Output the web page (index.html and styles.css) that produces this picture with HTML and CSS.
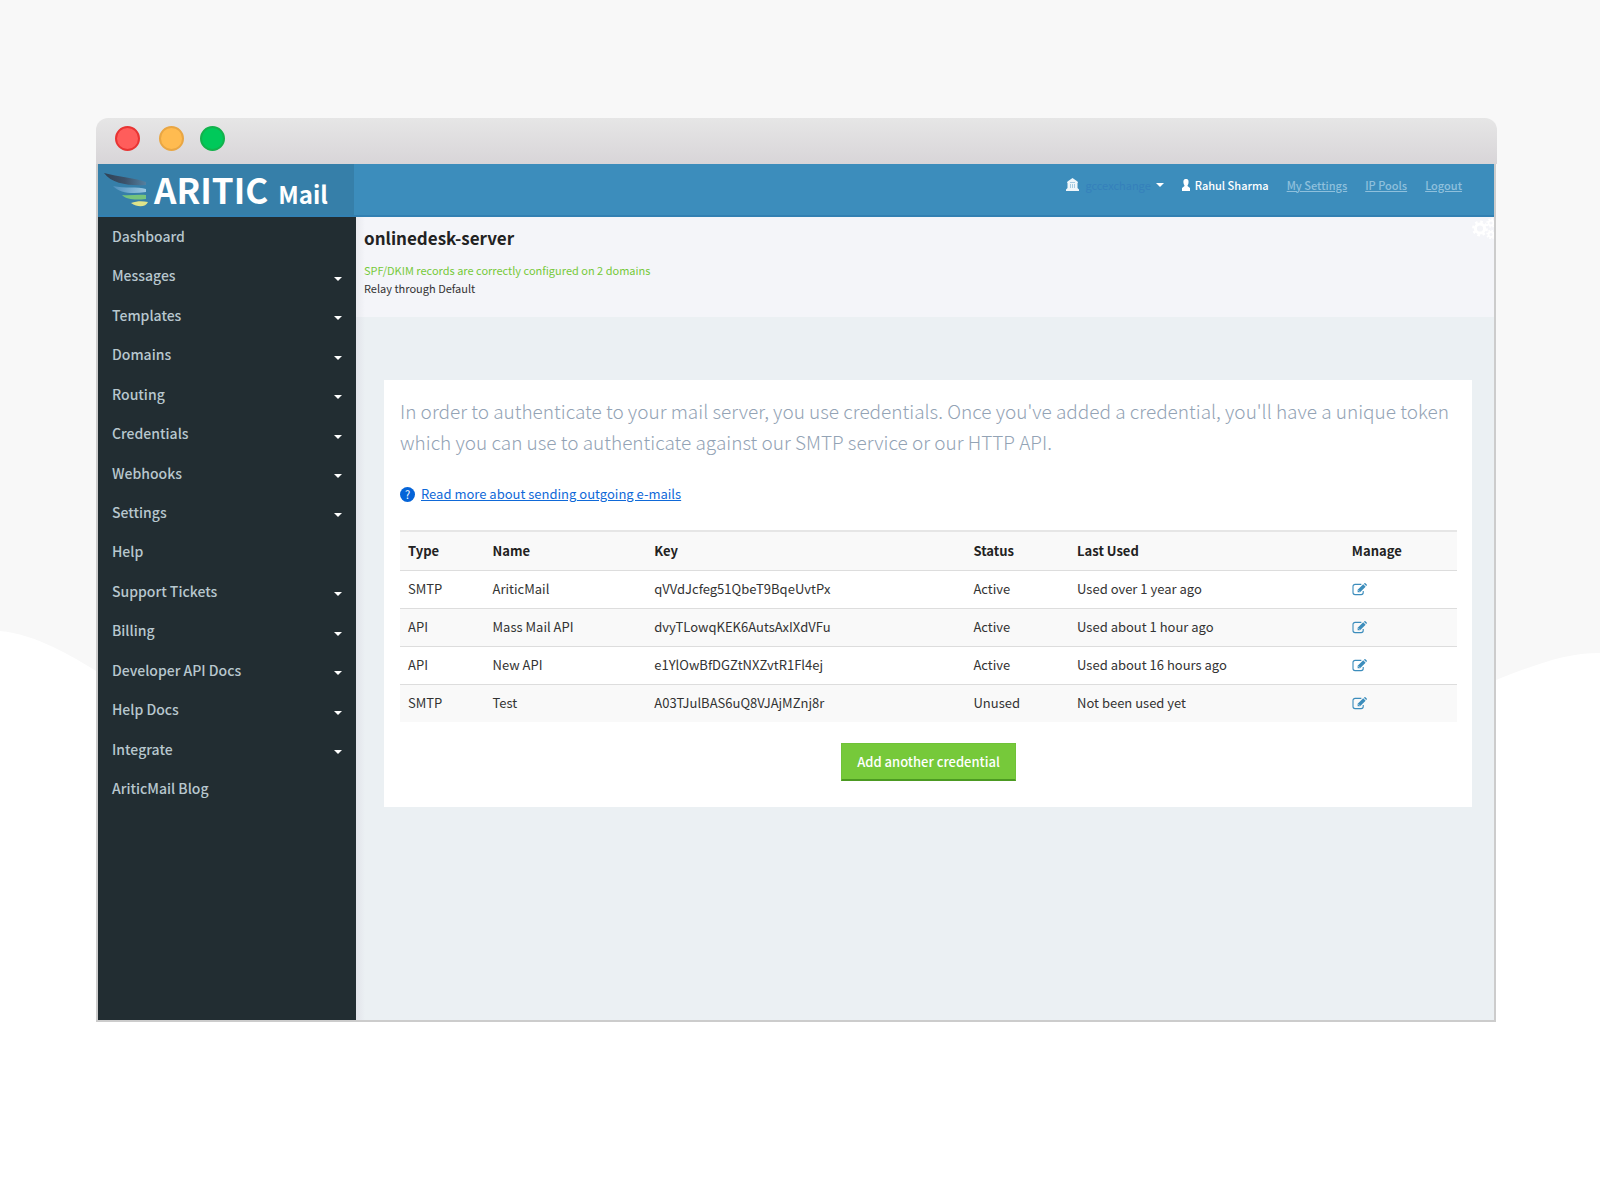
FILE: index.html
```html
<!DOCTYPE html>
<html lang="en">
<head>
<meta charset="utf-8">
<title>Credentials - AriticMail</title>
<link rel="stylesheet" href="styles.css">
</head>
<body>
<svg class="defs" aria-hidden="true">
  <symbol id="edit" viewBox="0 0 16 14">
    <path d="M10 1.5H3.2A2.2 2.2 0 0 0 1 3.700v6.600a2.200 2.200 0 0 0 2.200 2.200h6.600a2.200 2.200 0 0 0 2.200-2.200V8.500" fill="none" stroke="currentColor" stroke-width="1.200"/>
    <path d="M6 10V7.400l6-6 2.600 2.600-6 6zM12.700.8l.7-.6q.5-.4 1 0l1.400 1.400q.4.500 0 1l-.6.700z" fill="currentColor"/>
    <path d="M7 8l1.200 1.200" stroke="#fff" stroke-width=".8"/>
  </symbol>
</svg>
<svg class="backdrop" viewBox="0 0 1600 1200" preserveAspectRatio="none" aria-hidden="true">
  <path d="M0 631C35 634 72 656 96 671C400 850 1100 830 1496 680C1540 663 1566 653 1600 653V1200H0z" fill="#fff"/>
</svg>
<div class="window">
  <div class="titlebar"><span class="dot red"></span><span class="dot amber"></span><span class="dot green"></span></div>
  <div class="frame">
    <header class="top">
      <a class="logo" href="#">
        <svg class="wing" viewBox="0 0 44 34" aria-hidden="true">
          <defs>
            <linearGradient id="w" x1="0" x2="1"><stop offset="0" stop-color="#2f4154"/><stop offset=".5" stop-color="#3c526a"/><stop offset="1" stop-color="#5480a0"/></linearGradient>
            <linearGradient id="b" x1="0" x2="1"><stop offset="0" stop-color="#4f90bd"/><stop offset="1" stop-color="#9cc8e2"/></linearGradient>
          </defs>
          <path d="M0 0C14 4 32 5 42 9V12C26 13 8 11 0 0z" fill="url(#w)"/>
          <path d="M9 13C20 16 34 13 42 16V19C30 21 16 21 9 13z" fill="url(#b)"/>
          <path d="M18 22C26 23 34 21 42 22V26C32 27 23 27 18 22z" fill="#76c47c"/>
          <path d="M27 30C33 28 38 28 44 29C42 34 34 35 27 30z" fill="#dfe48a"/>
        </svg>
        <span class="brand">ARITIC</span><span class="product">Mail</span>
      </a>
      <nav class="account">
        <button class="org" type="button">
          <svg width="13" height="13" viewBox="0 0 13 13" aria-hidden="true"><path d="M6.500 0L11.500 3.500 12 5H11.500v5L13 11.500V13H0v-1.500L1.500 10V5H1L1.500 3.500z" fill="#fff" opacity=".92"/><path d="M4.500 6v4M6.500 6v4M8.500 6v4" stroke="#3c8dbc" stroke-width="1" opacity=".4"/><path d="M4 4.500h5" stroke="#3c8dbc" opacity=".4"/></svg>
          <span class="org-name">gccexchange</span><span class="caret"></span>
        </button>
        <span class="user"><svg width="8" height="12" viewBox="0 0 8 12" aria-hidden="true"><path d="M4 0C6.500 0 6.800 2 6.500 4 6.300 5.500 5.500 6 5.500 7L8 9v3H0V9l2.500-2C2.500 6 1.700 5.500 1.500 4 1.200 2 1.500 0 4 0z" fill="#fff"/></svg>Rahul Sharma</span>
        <a href="#">My Settings</a><a href="#">IP Pools</a><a href="#">Logout</a>
      </nav>
    </header>
    <div class="body">
      <nav class="side">
        <a href="#">Dashboard</a>
        <a class="more" href="#">Messages</a>
        <a class="more" href="#">Templates</a>
        <a class="more" href="#">Domains</a>
        <a class="more" href="#">Routing</a>
        <a class="more" href="#">Credentials</a>
        <a class="more" href="#">Webhooks</a>
        <a class="more" href="#">Settings</a>
        <a href="#">Help</a>
        <a class="more" href="#">Support Tickets</a>
        <a class="more" href="#">Billing</a>
        <a class="more" href="#">Developer API Docs</a>
        <a class="more" href="#">Help Docs</a>
        <a class="more" href="#">Integrate</a>
        <a href="#">AriticMail Blog</a>
      </nav>
      <main class="main">
        <section class="server">
          <h1>onlinedesk-server</h1>
          <p class="ok">SPF/DKIM records are correctly configured on 2 domains</p>
          <p>Relay through Default</p>
          <svg class="gears" viewBox="0 0 22 22" fill="none" stroke="#fff" aria-hidden="true">
            <circle cx="8" cy="10.500" r="4.600" stroke-width="3"/><circle cx="8" cy="10.500" r="6.800" stroke-width="2.200" stroke-dasharray="2.670 2.670"/>
            <circle cx="19" cy="5" r="2.500" stroke-width="1.800"/><circle cx="19" cy="5" r="4" stroke-width="1.500" stroke-dasharray="1.570 1.570"/>
            <circle cx="19" cy="16.500" r="2.500" stroke-width="1.800"/><circle cx="19" cy="16.500" r="4" stroke-width="1.500" stroke-dasharray="1.570 1.570"/>
          </svg>
        </section>
        <section class="card">
          <p class="lead">In order to authenticate to your mail server, you use credentials. Once you've added a credential, you'll have a unique token which you can use to authenticate against our SMTP service or our HTTP API.</p>
          <p class="read"><span class="help">?</span><a href="#">Read more about sending outgoing e-mails</a></p>
          <table>
            <colgroup><col class="c-type"><col class="c-name"><col class="c-key"><col class="c-status"><col class="c-used"><col></colgroup>
            <thead><tr><th>Type</th><th>Name</th><th>Key</th><th>Status</th><th>Last Used</th><th>Manage</th></tr></thead>
            <tbody>
              <tr><td>SMTP</td><td>AriticMail</td><td>qVVdJcfeg51QbeT9BqeUvtPx</td><td>Active</td><td>Used over 1 year ago</td><td><a href="#" aria-label="Edit"><svg class="edit"><use href="#edit"/></svg></a></td></tr>
              <tr><td>API</td><td>Mass Mail API</td><td>dvyTLowqKEK6AutsAxIXdVFu</td><td>Active</td><td>Used about 1 hour ago</td><td><a href="#" aria-label="Edit"><svg class="edit"><use href="#edit"/></svg></a></td></tr>
              <tr><td>API</td><td>New API</td><td>e1YlOwBfDGZtNXZvtR1Fl4ej</td><td>Active</td><td>Used about 16 hours ago</td><td><a href="#" aria-label="Edit"><svg class="edit"><use href="#edit"/></svg></a></td></tr>
              <tr><td>SMTP</td><td>Test</td><td>A03TJulBAS6uQ8VJAjMZnj8r</td><td>Unused</td><td>Not been used yet</td><td><a href="#" aria-label="Edit"><svg class="edit"><use href="#edit"/></svg></a></td></tr>
            </tbody>
          </table>
          <button class="add" type="button">Add another credential</button>
        </section>
      </main>
    </div>
  </div>
</div>
</body>
</html>
```
FILE: styles.css
```css
* { box-sizing: border-box; }
body {
  margin: 0;
  min-height: 100vh;
  background: #f8f8f8;
  font: 13px/20px "Noto Sans CJK SC", "Noto Sans", sans-serif;
  color: #333;
}
h1, p { margin: 0; }
button { font: inherit; border: 0; background: none; padding: 0; }
.defs { position: absolute; width: 0; height: 0; }
.backdrop { position: absolute; inset: 0; width: 100%; height: 100%; }
.window { position: relative; padding: 118px 103px 178px 96px; }

.titlebar {
  display: flex;
  align-items: center;
  height: 46px;
  padding: 0 19px 6px;
  border-radius: 12px 12px 0 0;
  background: linear-gradient(#e6e6e6, #d8d5d8);
}
.dot { width: 25px; height: 25px; border-radius: 50%; border: 2px solid; }
.red { background: #ff5d5b; border-color: #e83433; margin-right: 19px; }
.amber { background: #ffbb50; border-color: #e9a643; margin-right: 16px; }
.green { background: #00c95a; border-color: #12b24c; }

.frame {
  display: flex;
  flex-direction: column;
  min-height: 858px;
  margin-right: 1px;
  border: 2px solid #ccc;
  border-top: 0;
}
.top { display: flex; height: 53px; background: #3c8dbc; border-bottom: 2px solid #3280b2; }
.logo {
  display: flex;
  align-items: baseline;
  width: 256px;
  padding-left: 6px;
  background: #367fa9;
  color: #fff;
  text-decoration: none;
  line-height: 50px;
}
.wing { width: 44px; height: 34px; align-self: center; }
.brand { margin-left: 6px; font-size: 35px; font-weight: 700; }
.product { margin-left: 10px; font-size: 24px; font-weight: 700; }
.account {
  display: flex;
  align-items: center;
  gap: 18px;
  height: 41px;
  margin-left: auto;
  padding-right: 32px;
  font-size: 11px;
  font-weight: 500;
}
.account a { color: #8fc0dc; }
.org, .user { display: flex; align-items: center; color: #fff; }
.org-name { margin: 0 5px 0 6px; color: #3580bb; font-weight: 400; }
.user svg { margin-right: 5px; }
.caret, .more::after { border: 4px solid transparent; border-top-color: #fff; border-bottom: 0; }

.body { display: flex; flex: 1; }
.side {
  display: grid;
  grid-auto-rows: 1fr;
  width: 258px;
  padding-bottom: 211px;
  background: #222d32;
}
.side a {
  display: flex;
  align-items: center;
  justify-content: space-between;
  padding: 0 14px 2px;
  color: #b8c7ce;
  font-size: 14px;
  font-weight: 500;
  text-decoration: none;
}
.more::after { content: ""; margin-top: 7px; }

.main { flex: 1; background: linear-gradient(90deg, #e2e4ea, #ebf0f3 9px); }
.server {
  position: relative;
  height: 100px;
  padding: 10px 8px 0;
  background: linear-gradient(90deg, #e9eaef, #f4f5f9 9px);
  font-size: 11px;
  line-height: 18px;
  overflow: hidden;
}
.server h1 { margin-bottom: 12px; font-size: 17px; line-height: 22px; color: #222; }
.server .ok { color: #76c93a; }
.gears { position: absolute; top: 1px; right: 0; width: 22px; height: 22px; }

.card { margin: 63px 22px 0 28px; padding: 15px 15px 26px 16px; background: #fff; }
.lead { font-size: 19px; font-weight: 300; line-height: 31px; color: #93a3b5; }
.read { display: flex; align-items: center; margin: 27px 0 26px; }
.read a { color: #0f69d8; }
.help {
  width: 15px;
  height: 15px;
  margin-right: 6px;
  border-radius: 50%;
  background: #0564d8;
  color: #fff;
  font-size: 11px;
  line-height: 15px;
  text-align: center;
}
table { width: 100%; table-layout: fixed; border-collapse: collapse; }
.c-type { width: 8%; }
.c-name { width: 15.300%; }
.c-key { width: 30.200%; }
.c-status { width: 9.800%; }
.c-used { width: 26%; }
th, td { height: 38px; padding: 0 8px; border-top: 1px solid #ddd; text-align: left; }
th { height: 39px; border-top: 2px solid #e6e6e6; font-weight: 700; color: #222; }
thead tr, tbody tr:nth-child(even) { background: #f9f9f9; }
.edit { display: block; width: 15px; height: 13px; color: #3c8dbc; }
.add {
  display: block;
  height: 38px;
  margin: 21px auto 0;
  padding: 0 15px;
  border: 1px solid #70c238;
  border-bottom: 2px solid #4c9a22;
  background: #76c93a;
  color: #fff;
  font-weight: 500;
}
```
